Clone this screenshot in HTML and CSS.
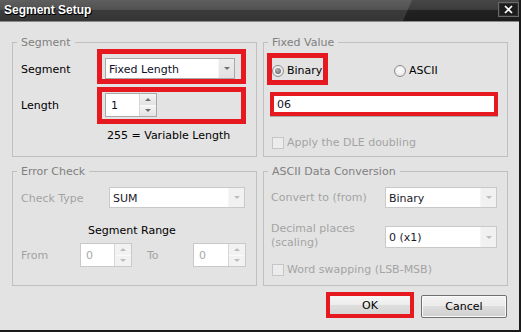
FILE: index.html
```html
<!DOCTYPE html>
<html>
<head>
<meta charset="utf-8">
<title>Segment Setup</title>
<link rel="stylesheet" href="styles.css">
</head>
<body>
<div class="dialog">
  <div class="titlebar">
    <span class="title">Segment Setup</span>
    <button class="close" type="button" aria-label="Close">
      <svg width="9" height="9" viewBox="0 0 9 9"><path d="M1 1L8 8M8 1L1 8" stroke="#fff" stroke-width="1.7" fill="none"/></svg>
    </button>
  </div>
  <div class="content">
    <div class="groups">
      <fieldset class="group">
        <legend>Segment</legend>
        <div class="row">
          <span class="lbl w-seg low">Segment</span>
          <div class="mark mark-combo">
            <div class="combo w-fixed"><span class="combo-text">Fixed Length</span><span class="combo-btn"><i class="arrow-down"></i></span></div>
          </div>
        </div>
        <div class="row r-len">
          <span class="lbl w-seg">Length</span>
          <div class="mark mark-spin">
            <div class="spin"><span class="spin-text">1</span><span class="spin-btns"><span class="sb"><i class="arrow-up"></i></span><span class="sb"><i class="arrow-down"></i></span></span></div>
          </div>
        </div>
        <div class="note">255 = Variable Length</div>
      </fieldset>

      <fieldset class="group">
        <legend>Fixed Value</legend>
        <div class="row r-radio">
          <div class="mark mark-radio">
            <span class="radio checked"></span><span class="radio-lbl">Binary</span>
          </div>
          <div class="radio-opt">
            <span class="radio"></span><span class="radio-lbl">ASCII</span>
          </div>
        </div>
        <div class="mark mark-input">06</div>
        <div class="row r-check">
          <span class="check"></span><span class="dis">Apply the DLE doubling</span>
        </div>
      </fieldset>

      <fieldset class="group">
        <legend>Error Check</legend>
        <div class="row r-first">
          <span class="lbl dis w-check">Check Type</span>
          <div class="combo disabled w-sum"><span class="combo-text">SUM</span><span class="combo-btn"><i class="arrow-down"></i></span></div>
        </div>
        <div class="range-title">Segment Range</div>
        <div class="row r-range">
          <span class="lbl dis w-from">From</span>
          <div class="spin disabled"><span class="spin-text">0</span><span class="spin-btns"><span class="sb"><i class="arrow-up"></i></span><span class="sb"><i class="arrow-down"></i></span></span></div>
          <span class="lbl dis w-to">To</span>
          <div class="spin disabled w-spin2"><span class="spin-text">0</span><span class="spin-btns"><span class="sb"><i class="arrow-up"></i></span><span class="sb"><i class="arrow-down"></i></span></span></div>
        </div>
      </fieldset>

      <fieldset class="group">
        <legend>ASCII Data Conversion</legend>
        <div class="row r-first">
          <span class="lbl dis w-conv">Convert to (from)</span>
          <div class="combo disabled w-conv-combo"><span class="combo-text">Binary</span><span class="combo-btn"><i class="arrow-down"></i></span></div>
        </div>
        <div class="row r-dec">
          <span class="lbl dis w-conv two-line">Decimal places<br>(scaling)</span>
          <div class="combo disabled w-conv-combo tall"><span class="combo-text">0 (x1)</span><span class="combo-btn"><i class="arrow-down"></i></span></div>
        </div>
        <div class="row r-check2">
          <span class="check"></span><span class="dis">Word swapping (LSB-MSB)</span>
        </div>
      </fieldset>
    </div>

    <div class="buttons">
      <button class="btn btn-ok" type="button">OK</button>
      <button class="btn btn-cancel" type="button">Cancel</button>
    </div>
  </div>
</div>
</body>
</html>
```

FILE: styles.css
```css
* { box-sizing: border-box; }

html, body {
  margin: 0;
  padding: 0;
}

body {
  width: 521px;
  height: 332px;
  overflow: hidden;
  background: #1a1a1a;
  font-family: "DejaVu Sans", sans-serif;
  font-size: 11px;
  color: #000;
}

.dialog {
  width: 519px;
  height: 330px;
  display: flex;
  flex-direction: column;
  background: #e3e3e3;
}

/* ---------- title bar ---------- */
.titlebar {
  position: relative;
  height: 22px;
  flex: 0 0 22px;
  display: flex;
  align-items: center;
  justify-content: space-between;
  padding: 0 0 0 4px;
  background: linear-gradient(#5e5e5e 0%, #525252 45%, #3b3b3b 48%, #353535 100%);
  border-bottom: 1px solid #8a8a8a;
  overflow: hidden;
}

.titlebar::before {
  content: "";
  position: absolute;
  inset: 0;
  background: linear-gradient(#474747 0%, #3c3c3c 45%, #222 48%, #1c1c1c 100%);
  clip-path: polygon(412px 0, 100% 0, 100% 100%, 403px 100%);
}

.title {
  position: relative;
  z-index: 1;
  font-family: "Liberation Sans", Arial, sans-serif;
  font-weight: bold;
  font-size: 12px;
  color: #fff;
  text-shadow: 1px 1px 0 #000, 0 1px 0 #000;
  margin-top: -1px;
}

.close {
  position: relative;
  z-index: 1;
  width: 21px;
  height: 15px;
  margin: -3px 0 0 0;
  padding: 0;
  display: flex;
  align-items: center;
  justify-content: center;
  background: #1d1d1d;
  border: 1px solid #6a6a6a;
  box-shadow: inset 0 0 0 1px #2e2e2e;
}

/* ---------- content ---------- */
.content {
  flex: 1;
  display: flex;
  flex-direction: column;
  padding: 14px 0 0 12px;
}

.groups {
  display: grid;
  grid-template-columns: 245px 245px;
  grid-template-rows: 121px 121px;
  column-gap: 6px;
  row-gap: 8px;
}

.group {
  margin: 0;
  padding: 0 0 0 8px;
  min-width: 0;
  border: 1px solid #c0c0c0;
  display: flex;
  flex-direction: column;
  align-items: flex-start;
}

.group legend {
  padding: 0 4px;
  margin-left: -4px;
  line-height: 13px;
  color: #808080;
}

.row {
  display: flex;
  align-items: center;
}

.lbl { line-height: 13px; }
.lbl.low { margin-top: 5px; }
.dis { color: #a3a3a3; }

.w-seg { width: 76px; }
.w-check { width: 88px; margin-top: 2px; }
.w-from { width: 59px; }
.w-to { width: 46px; margin-left: 15px; }
.w-conv { width: 114px; margin-left: -1px; }

/* red annotation boxes */
.mark {
  border: 5px solid #e5191f;
}

.mark-combo {
  width: 149px;
  height: 35px;
  padding: 4px 6px 0 3px;
}

.r-len { margin-top: 3px; }

.mark-spin {
  width: 149px;
  height: 37px;
  padding: 1px 0 0 3px;
}

.note {
  margin: 5px 0 0 86px;
  line-height: 13px;
}

/* combo box */
.combo {
  display: flex;
  height: 21px;
  background: #fff;
  border: 1px solid #a9a9a9;
}

.combo.tall { height: 22px; }
.w-fixed { width: 130px; }
.w-sum { width: 136px; }
.w-conv-combo { width: 112px; }

.combo-text {
  flex: 1;
  padding-left: 3px;
  padding-top: 1px;
  display: flex;
  align-items: center;
  color: #101028;
  white-space: nowrap;
}

.combo-btn {
  width: 16px;
  display: flex;
  align-items: center;
  justify-content: center;
  background: linear-gradient(#ececec, #e2e2e2);
  border-left: 1px solid #f6f6f6;
}

.combo.disabled { border-color: #c9c9c9; }
.combo.disabled .combo-text { color: #1a1a2a; }
.combo.disabled .combo-btn { background: #f1f1f1; }

.arrow-down {
  width: 0;
  height: 0;
  border-left: 3px solid transparent;
  border-right: 3px solid transparent;
  border-top: 3px solid #707070;
}

.arrow-up {
  width: 0;
  height: 0;
  border-left: 3px solid transparent;
  border-right: 3px solid transparent;
  border-bottom: 3px solid #707070;
}

.disabled .arrow-down { border-top-color: #bdbdbd; }
.disabled .arrow-up { border-bottom-color: #bdbdbd; }

/* spin box */
.spin {
  display: flex;
  width: 52px;
  height: 24px;
  background: #fff;
  border: 1px solid #a9a9a9;
}

.w-spin2 { width: 53px; }

.spin-text {
  flex: 1;
  padding-left: 5px;
  display: flex;
  align-items: center;
  color: #101028;
}

.spin-btns {
  width: 17px;
  display: flex;
  flex-direction: column;
  border-left: 1px solid #d6d6d6;
}

.sb {
  flex: 1;
  display: flex;
  align-items: center;
  justify-content: center;
  background: linear-gradient(#f4f4f4, #e3e3e3);
}

.sb + .sb { border-top: 1px solid #fafafa; }

.spin.disabled { border-color: #c9c9c9; }
.spin.disabled .spin-text { color: #a8a8a8; }
.spin.disabled .sb { background: #f2f2f2; }

/* radios */
.r-radio { margin-top: 4px; }

.mark-radio {
  width: 61px;
  height: 32px;
  margin-left: -5px;
  display: flex;
  align-items: center;
  padding-top: 3px;
}

.radio {
  width: 12px;
  height: 12px;
  border-radius: 50%;
  border: 1px solid #8e8e8e;
  background: radial-gradient(circle at 50% 40%, #ffffff, #dedede);
  display: flex;
  align-items: center;
  justify-content: center;
  flex: 0 0 12px;
}

.radio.checked::after {
  content: "";
  width: 6px;
  height: 6px;
  border-radius: 50%;
  background: radial-gradient(circle at 40% 35%, #b4b4b4, #5e5e5e);
}

.radio-lbl {
  margin-left: 3px;
  line-height: 13px;
}

.radio-opt {
  margin-left: 66px;
  padding-top: 3px;
  display: flex;
  align-items: center;
}

/* text input */
.mark-input {
  margin: 7px 0 0 -2px;
  width: 228px;
  height: 24px;
  border-width: 4px;
  background: #fff;
  padding-left: 3px;
  display: flex;
  align-items: center;
  box-shadow: 0 1px 0 #a8a8a8;
  color: #101028;
}

/* checkboxes */
.check {
  width: 12px;
  height: 12px;
  flex: 0 0 12px;
  border: 1px solid #c6c6c6;
  background: #ececec;
  margin-right: 3px;
}

.r-check { margin-top: 20px; line-height: 13px; }
.r-check2 { margin-top: 13px; line-height: 13px; }

/* error check */
.r-first { margin-top: 9px; }

.range-title {
  margin: 16px 0 0 67px;
  line-height: 13px;
}

.r-range { margin-top: 6px; }

.r-dec { margin-top: 16px; }

.two-line { line-height: 14px; margin-top: -2px; }

/* buttons */
.buttons {
  margin-top: 6px;
  padding-right: 12px;
  display: flex;
  justify-content: flex-end;
  align-items: flex-end;
  gap: 7px;
}

.btn {
  margin: 0;
  padding: 0;
  font-family: "DejaVu Sans", sans-serif;
  font-size: 11px;
  color: #000;
  display: flex;
  align-items: center;
  justify-content: center;
}

.btn-ok {
  width: 88px;
  height: 26px;
  border: 4px solid #e5191f;
  background: linear-gradient(#f6f6f6 0%, #ededed 50%, #dedede 50%, #d6d6d6 100%);
}

.btn-cancel {
  width: 86px;
  height: 23px;
  border: 1px solid #707070;
  border-radius: 2px;
  background: linear-gradient(#f2f2f2 0%, #ebebeb 50%, #dddddd 50%, #cfcfcf 100%);
  box-shadow: inset 0 0 0 1px #fbfbfb;
}
```
